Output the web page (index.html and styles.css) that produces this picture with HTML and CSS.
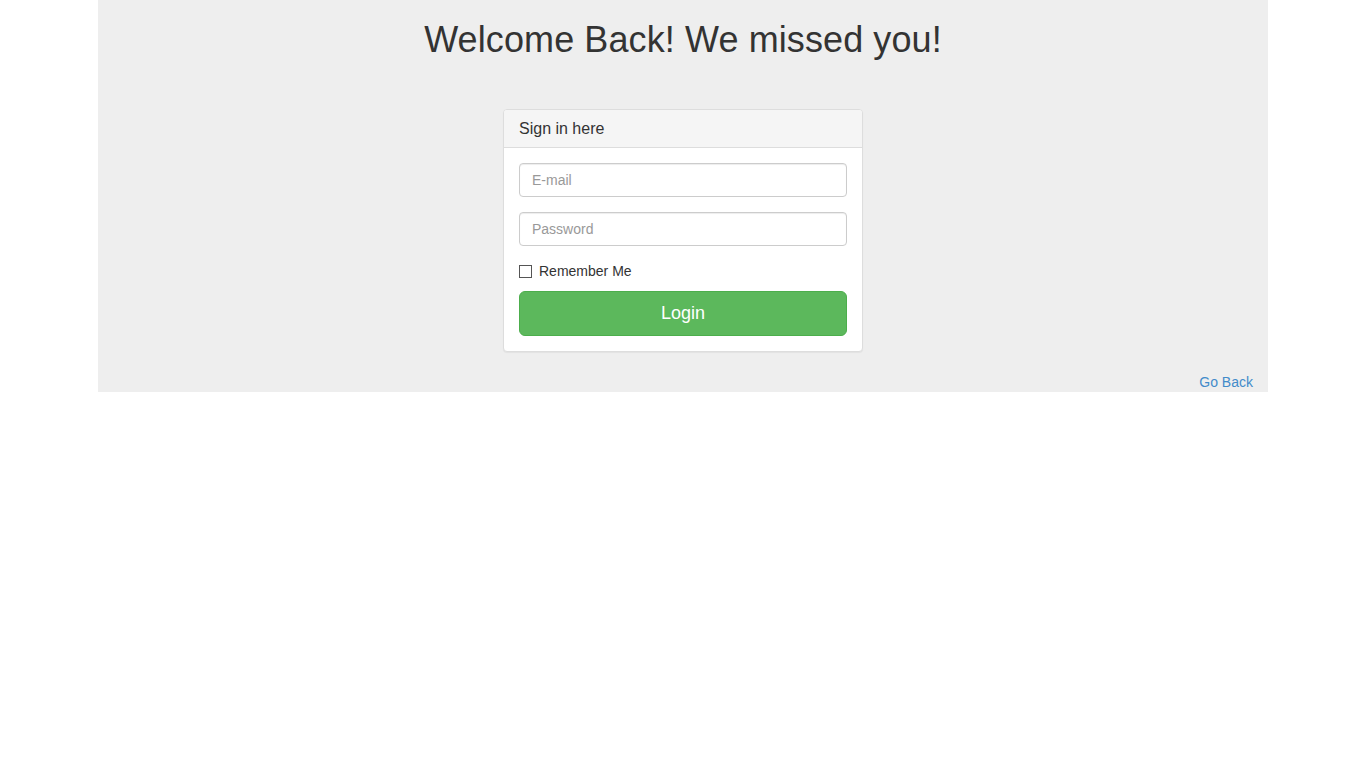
FILE: index.html
```html
<!DOCTYPE html>
<html>
<head>
<meta charset="utf-8">
<title>Login</title>
<link rel="stylesheet" href="styles.css">
</head>
<body>
<div class="container">
  <h1 class="title">Welcome Back! We missed you!</h1>
  <div class="row">
    <div class="panel">
      <div class="panel-heading">
        <h3 class="panel-title">Sign in here</h3>
      </div>
      <div class="panel-body">
        <form>
          <div class="form-group">
            <input class="form-control" type="text" placeholder="E-mail">
          </div>
          <div class="form-group">
            <input class="form-control" type="password" placeholder="Password">
          </div>
          <div class="checkbox">
            <label><input type="checkbox" class="check"> Remember Me</label>
          </div>
          <button type="button" class="btn-login">Login</button>
        </form>
      </div>
    </div>
  </div>
  <div class="footer-row">
    <a href="#" class="back-link">Go Back</a>
  </div>
</div>
</body>
</html>
```

FILE: styles.css
```css
* { box-sizing: border-box; }
html, body { margin: 0; padding: 0; }
body {
  font-family: "Liberation Sans", Arial, sans-serif;
  font-size: 14px;
  line-height: 1.428571429;
  color: #333;
  background: #fff;
}
.container {
  width: 1170px;
  margin: 0 auto;
  padding: 0 15px;
  background: #eee;
  overflow: hidden;
}
.title {
  font-size: 36px;
  font-weight: 500;
  line-height: 1.1;
  margin: 20px 0 10px;
  text-align: center;
  letter-spacing: 0.1px;
}
.row {
  display: flex;
  justify-content: center;
  padding-top: 39px;
}
.panel {
  width: 360px;
  background: #fff;
  border: 1px solid #ddd;
  border-radius: 4px;
  box-shadow: 0 1px 1px rgba(0,0,0,.05);
  margin-bottom: 20px;
}
.panel-heading {
  background: #f5f5f5;
  border-bottom: 1px solid #ddd;
  padding: 10px 15px;
  border-radius: 3px 3px 0 0;
}
.panel-title {
  margin: 0;
  font-size: 16px;
  font-weight: 500;
  line-height: 1.1;
  color: #333;
}
.panel-body { padding: 15px; }
form { margin: 0; }
.form-group { margin-bottom: 15px; }
.form-control {
  display: block;
  width: 100%;
  height: 34px;
  padding: 6px 12px;
  font-family: inherit;
  font-size: 14px;
  line-height: 1.428571429;
  color: #555;
  background: #fff;
  border: 1px solid #ccc;
  border-radius: 4px;
  box-shadow: inset 0 1px 1px rgba(0,0,0,.075);
  outline: none;
}
.form-control::placeholder { color: #999; }
.checkbox {
  min-height: 20px;
  margin: 0 0 10px;
  padding-left: 20px;
  position: relative;
}
.checkbox label {
  font-weight: 400;
  cursor: pointer;
  line-height: 20px;
}
.check {
  -webkit-appearance: none;
  appearance: none;
  position: absolute;
  left: 0;
  top: 4px;
  margin: 0;
  width: 13px;
  height: 13px;
  border: 1px solid #555;
  border-radius: 0;
  background: #fff;
}
.btn-login {
  display: block;
  width: 100%;
  padding: 10px 16px;
  font-family: inherit;
  font-size: 18px;
  line-height: 23px;
  color: #fff;
  background: #5cb85c;
  border: 1px solid #4cae4c;
  border-radius: 6px;
  cursor: pointer;
}
.footer-row {
  display: flex;
  justify-content: flex-end;
  line-height: 20px;
}
.back-link {
  color: #428bca;
  text-decoration: none;
}
```
